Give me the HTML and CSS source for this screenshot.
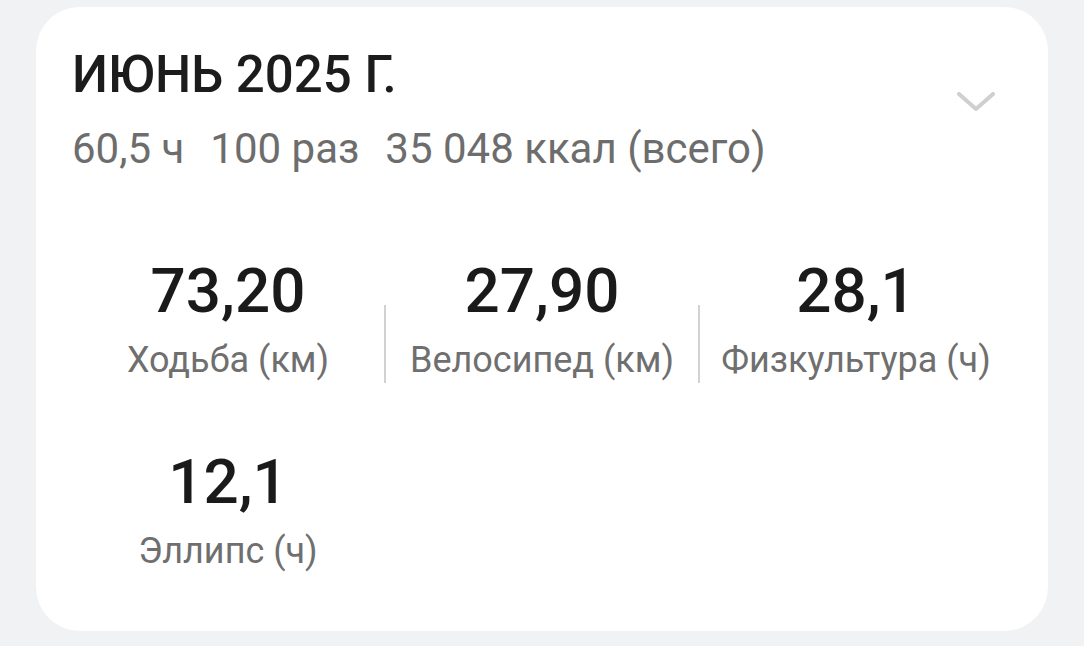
FILE: index.html
```html
<!DOCTYPE html>
<html lang="ru">
<head>
<meta charset="utf-8">
<title>Июнь 2025 г.</title>
<link rel="stylesheet" href="styles.css">
</head>
<body>
  <section class="card">
    <header class="card-head">
      <div class="head-text">
        <h1 class="title">ИЮНЬ 2025 Г.</h1>
        <p class="summary"><span>60,5 ч</span><span>100 раз</span><span>35 048 ккал (всего)</span></p>
      </div>
      <svg class="chevron" width="38" height="19" viewBox="0 0 38 19" aria-hidden="true">
        <path d="M2 2 L19 17 L36 2" fill="none" stroke="currentColor" stroke-width="4" stroke-linecap="round" stroke-linejoin="round"/>
      </svg>
    </header>

    <div class="stats">
      <div class="stat">
        <div class="value">73,20</div>
        <div class="label">Ходьба (км)</div>
      </div>
      <span class="divider"></span>
      <div class="stat">
        <div class="value">27,90</div>
        <div class="label">Велосипед (км)</div>
      </div>
      <span class="divider"></span>
      <div class="stat">
        <div class="value">28,1</div>
        <div class="label">Физкультура (ч)</div>
      </div>

      <div class="stat">
        <div class="value">12,1</div>
        <div class="label">Эллипс (ч)</div>
      </div>
    </div>
  </section>
</body>
</html>
```

FILE: styles.css
```css
* {
  box-sizing: border-box;
}

html, body {
  margin: 0;
  height: 100%;
}

body {
  background: #f1f2f4;
  font-family: Roboto, "Noto Sans", "Liberation Sans", sans-serif;
  padding: 7px 36px 0 36px;
}

.card {
  background: #ffffff;
  border-radius: 44px;
  height: 624px;
  padding: 40px 36px 0 36px;
}

.card-head {
  display: flex;
  justify-content: space-between;
  align-items: flex-start;
}

.title {
  margin: 0;
  font-size: 51px;
  line-height: 56px;
  font-weight: 500;
  color: #1c1c1c;
}

.summary {
  margin: 21px 0 0 0;
  font-size: 42px;
  line-height: 50px;
  font-weight: 400;
  color: #6d6d6d;
  display: flex;
  gap: 26px;
}

.chevron {
  color: #cfcfcf;
  margin-top: 45px;
  margin-right: 17px;
}

.stats {
  margin-top: 85px;
  display: grid;
  grid-template-columns: 1fr 2px 1fr 2px 1fr;
  row-gap: 67px;
}

.stat {
  display: flex;
  flex-direction: column;
  align-items: center;
}

.value {
  font-size: 62px;
  line-height: 63px;
  font-weight: 500;
  color: #1a1a1a;
}

.label {
  margin-top: 15px;
  font-size: 36px;
  line-height: 46px;
  color: #6f6f6f;
}

.divider {
  align-self: end;
  height: 78px;
  background: #d2d2d2;
}
```
